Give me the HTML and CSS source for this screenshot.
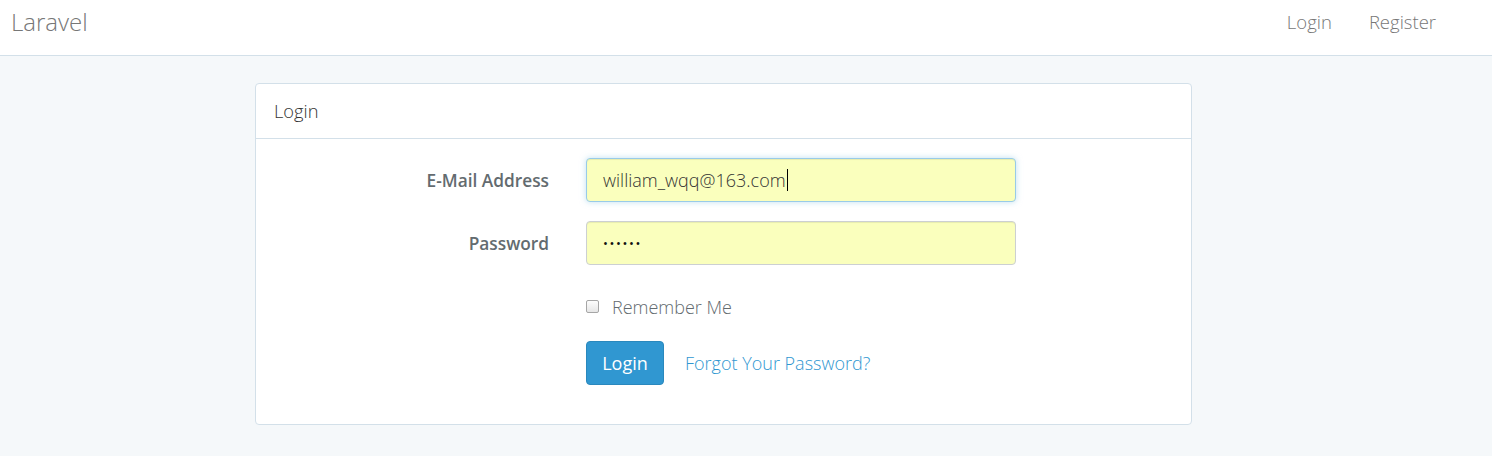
FILE: index.html
```html
<!DOCTYPE html>
<html lang="en">
<head>
<meta charset="utf-8">
<title>Laravel</title>
<link rel="stylesheet" href="styles.css">
</head>
<body>
<nav class="navbar">
  <a class="brand" href="#">Laravel</a>
  <ul class="nav-right">
    <li><a href="#">Login</a></li>
    <li><a href="#">Register</a></li>
  </ul>
</nav>
<main class="main">
  <section class="panel">
    <div class="panel-heading">Login</div>
    <form class="panel-body">
      <div class="form-group">
        <label class="control-label" for="email">E-Mail Address</label>
        <div class="field">
          <div class="form-control focus"><span>william_wqq@163.com</span><span class="caret"></span></div>
        </div>
      </div>
      <div class="form-group">
        <label class="control-label" for="password">Password</label>
        <div class="field">
          <div class="form-control dots">&bull;&bull;&bull;&bull;&bull;&bull;</div>
        </div>
      </div>
      <div class="form-group">
        <span class="control-label"></span>
        <div class="field">
          <label class="checkbox"><span class="box"></span>Remember Me</label>
        </div>
      </div>
      <div class="form-group">
        <span class="control-label"></span>
        <div class="field actions">
          <button type="button" class="btn">Login</button>
          <a class="link" href="#">Forgot Your Password?</a>
        </div>
      </div>
    </form>
  </section>
</main>
</body>
</html>
```
FILE: styles.css
```css
* { box-sizing: border-box; }
html, body { margin: 0; padding: 0; }
body {
  background: #f5f8fa;
  font-family: "Open Sans", "Liberation Sans", sans-serif;
  font-size: 18px;
  color: #636b6f;
  line-height: 1.6;
}
a { text-decoration: none; }

.navbar {
  height: 56px;
  background: #fff;
  border-bottom: 1px solid #d3e0e9;
  display: flex;
  align-items: flex-start;
  justify-content: space-between;
  padding: 0 0 0 11px;
}
.brand {
  color: #777;
  font-size: 24px;
  font-weight: 300;
  line-height: 44px;
}
.nav-right {
  list-style: none;
  display: flex;
  margin: 0;
  padding: 0 56px 0 0;
  gap: 37px;
}
.nav-right a {
  color: #777;
  font-size: 18.5px;
  font-weight: 300;
  line-height: 44px;
}

.main {
  padding: 27px 0 0 255px;
}
.panel {
  width: 937px;
  background: #fff;
  border: 1px solid #d3e0e9;
  border-radius: 4px;
}
.panel-heading {
  height: 55px;
  border-bottom: 1px solid #d3e0e9;
  padding: 0 18px;
  display: flex;
  align-items: center;
  color: #333;
  font-size: 18.3px;
  font-weight: 300;
}
.panel-body {
  padding: 19px 0 39px 0;
  display: flex;
  flex-direction: column;
  gap: 19px;
}
.form-group {
  display: flex;
  align-items: center;
}
.control-label {
  width: 293px;
  text-align: right;
  font-weight: 600;
  font-size: 17.3px;
  flex: none;
  padding-top: 2px;
}
.field {
  margin-left: 37px;
  width: 430px;
}
.form-control {
  height: 44px;
  border: 1px solid #ccd0d2;
  border-radius: 4px;
  background: #faffbd;
  padding: 0 16px;
  display: flex;
  align-items: center;
  color: #333;
  font-size: 18px;
  font-weight: 300;
  box-shadow: inset 0 1px 1px rgba(0,0,0,.075);
}
.form-control.focus {
  border-color: #98cbe8;
  box-shadow: inset 0 1px 1px rgba(0,0,0,.075), 0 0 6px rgba(152,203,232,.6);
}
.caret {
  display: inline-block;
  width: 1px;
  height: 22px;
  background: #000;
  margin-left: 1px;
}
.dots {
  color: #111;
  font-size: 13px;
  letter-spacing: 1.6px;
  font-weight: 400;
}
.checkbox {
  display: flex;
  align-items: center;
  font-weight: 300;
  font-size: 18px;
  height: 38px;
  padding-top: 9px;
  padding-bottom: 1px;
}
.box {
  width: 13px;
  height: 13px;
  border: 1px solid #a6a6a6;
  border-radius: 2px;
  background: linear-gradient(#fdfdfd, #e6e6e6);
  margin-right: 13px;
  margin-top: -2px;
}
.actions {
  display: flex;
  align-items: center;
  gap: 21px;
}
.btn {
  height: 44px;
  width: 78px;
  background: #3097d1;
  border: 1px solid #2a88bd;
  border-radius: 4px;
  color: #fff;
  font-family: inherit;
  font-size: 18px;
  font-weight: 400;
  padding: 0;
}
.link {
  color: #3097d1;
  font-size: 18px;
  font-weight: 300;
}
```
